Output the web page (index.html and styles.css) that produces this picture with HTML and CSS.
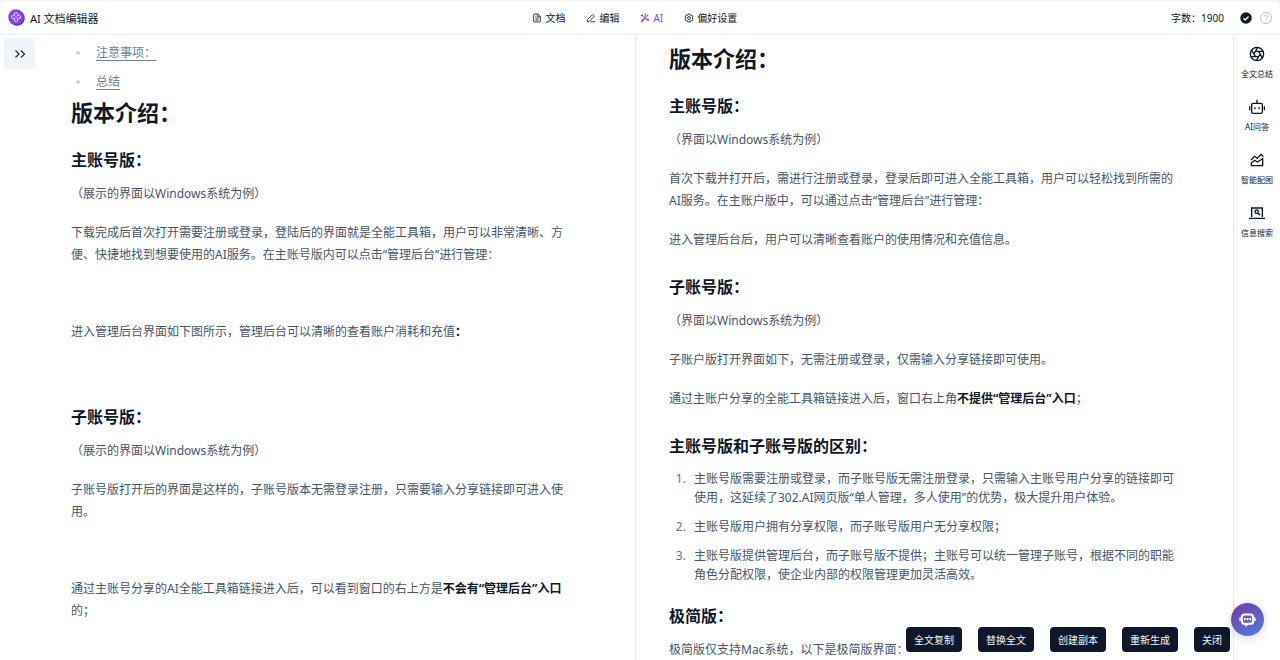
FILE: index.html
```html
<!DOCTYPE html>
<html lang="zh-CN">
<head>
<meta charset="utf-8">
<meta name="viewport" content="width=device-width, initial-scale=1">
<title>AI 文档编辑器</title>
<link rel="stylesheet" href="styles.css">
</head>
<body>
<div class="app">
  <header class="topbar">
    <div class="brand">
      <svg class="logo" viewBox="0 0 36 36" fill="none" aria-hidden="true">
        <circle cx="19" cy="19" r="16.500" fill="#4436a8"/>
        <circle cx="17" cy="17" r="16.500" fill="#8a3ff0"/>
        <path d="M13.500 13.500V11a3.500 3.500 0 0 1 7 0v2.500H23a3.500 3.500 0 0 1 0 7h-2.500V23a3.500 3.500 0 0 1-7 0v-2.500H11a3.500 3.500 0 0 1 0-7z" stroke="#f3ebff" stroke-width="2"/>
        <path d="M17 13.500v7M13.500 17h7" stroke="#d9c2ff" stroke-width="1.500"/>
      </svg>
      <span>AI 文档编辑器</span>
    </div>
    <nav class="menu" aria-label="主菜单">
      <button type="button" class="menu-item">
        <svg viewBox="0 0 24 24" aria-hidden="true"><path d="M14 2.500H5.500C4.700 2.500 4 3.200 4 4v16c0 .8.700 1.500 1.500 1.500h13c.8 0 1.500-.7 1.500-1.500V8.500zM13.500 3v6H20M8 8h2.500M8 12.500h8M8 17h8"/></svg>
        <span>文档</span>
      </button>
      <button type="button" class="menu-item">
        <svg viewBox="0 0 24 24" aria-hidden="true"><path d="M11 21h11M3 21v-4.500L16 3.500l4 4L7 21z"/></svg>
        <span>编辑</span>
      </button>
      <button type="button" class="menu-item active">
        <svg viewBox="0 0 24 24" aria-hidden="true"><path d="M3 21L14 10" stroke-width="4"/><path d="M15 9l5-5M5 3v6M2 6h6M13 2v4M11 4h4M19 13v6M16 16h6M8 10l3-2M14 16l2-3" stroke-width="2.500"/></svg>
        <span>AI</span>
      </button>
      <button type="button" class="menu-item">
        <svg viewBox="0 0 24 24" aria-hidden="true"><path d="M9.500 2.500h5l1.300 3 3.200-.3 2.500 4.300L19.700 12l1.800 2.500-2.500 4.300-3.200-.3-1.300 3h-5l-1.300-3-3.200.3-2.500-4.300L4.300 12 2.500 9.500 5 5.200l3.200.3z"/><circle cx="12" cy="12" r="3.500"/></svg>
        <span>偏好设置</span>
      </button>
    </nav>
    <div class="status">
      <span class="count">字数：1900</span>
      <svg viewBox="0 0 24 24" role="img" aria-label="已保存"><circle cx="12" cy="12" r="11.500" fill="#0f172a"/><path d="M7 12.500l3.500 3.500L17 9" fill="none" stroke="#fff" stroke-width="2.800"/></svg>
      <button type="button" class="help" aria-label="帮助">
        <svg viewBox="0 0 24 24" fill="none" stroke="#c4c4c4" stroke-width="2" aria-hidden="true"><circle cx="12" cy="12" r="11"/><path d="M8.500 9.500c0-4.500 7-4.500 7 0 0 2.500-3.500 2.500-3.500 5M12 16.500v2"/></svg>
      </button>
    </div>
  </header>

  <main class="workspace">
    <div class="gutter">
      <button type="button" class="expand" aria-label="展开目录">
        <svg viewBox="0 0 12 12" aria-hidden="true"><path d="M1.500 2.500L5 6 1.500 9.500M7 2.500L10.500 6 7 9.500"/></svg>
      </button>
    </div>
    <article class="pane source">
      <div class="prose">
        <ul>
          <li><a href="#notes">注意事项：</a></li>
          <li><a href="#summary">总结</a></li>
        </ul>
        <h1>版本介绍：</h1>
        <h3>主账号版：</h3>
        <p>（展示的界面以Windows系统为例）</p>
        <p>下载完成后首次打开需要注册或登录，登陆后的界面就是全能工具箱，用户可以非常清晰、方便、快捷地找到想要使用的AI服务。在主账号版内可以点击“管理后台”进行管理：</p>
        <p class="blank"></p>
        <p>进入管理后台界面如下图所示，管理后台可以清晰的查看账户消耗和充值<strong>：</strong></p>
        <p class="blank"></p>
        <h3>子账号版：</h3>
        <p>（展示的界面以Windows系统为例）</p>
        <p>子账号版打开后的界面是这样的，子账号版本无需登录注册，只需要输入分享链接即可进入使用。</p>
        <p class="blank"></p>
        <p>通过主账号分享的AI全能工具箱链接进入后，可以看到窗口的右上方是<strong>不会有“管理后台”入口</strong>的；</p>
      </div>
    </article>
    <article class="pane result">
      <div class="prose">
        <h1>版本介绍：</h1>
        <h3>主账号版：</h3>
        <p>（界面以Windows系统为例）</p>
        <p>首次下载并打开后，需进行注册或登录，登录后即可进入全能工具箱，用户可以轻松找到所需的AI服务。在主账户版中，可以通过点击“管理后台”进行管理：</p>
        <p>进入管理后台后，用户可以清晰查看账户的使用情况和充值信息。</p>
        <h3>子账号版：</h3>
        <p>（界面以Windows系统为例）</p>
        <p>子账户版打开界面如下，无需注册或登录，仅需输入分享链接即可使用。</p>
        <p>通过主账户分享的全能工具箱链接进入后，窗口右上角<strong>不提供“管理后台”入口</strong>；</p>
        <h3>主账号版和子账号版的区别：</h3>
        <ol>
          <li>主账号版需要注册或登录，而子账号版无需注册登录，只需输入主账号用户分享的链接即可使用，这延续了302.AI网页版“单人管理，多人使用”的优势，极大提升用户体验。</li>
          <li>主账号版用户拥有分享权限，而子账号版用户无分享权限；</li>
          <li>主账号版提供管理后台，而子账号版不提供；主账号可以统一管理子账号，根据不同的职能角色分配权限，使企业内部的权限管理更加灵活高效。</li>
        </ol>
        <h3>极简版：</h3>
        <p>极简版仅支持Mac系统，以下是极简版界面：</p>
      </div>
    </article>
    <aside class="tools" aria-label="AI 工具">
      <button type="button" class="tool">
        <svg viewBox="0 0 24 24" aria-hidden="true"><circle cx="12" cy="12" r="10"/><path d="M9.700 8H21M7.400 12L13 2.100M9.700 16L4 6.100M14.300 16H3M16.600 12L11 21.900M14.300 8L20 17.900"/></svg>
        <span>全文总结</span>
      </button>
      <button type="button" class="tool">
        <svg viewBox="0 0 24 24" aria-hidden="true"><rect x="4" y="6.500" width="16" height="15" rx="2"/><path d="M12 1v5.500M1 11v6M23 11v6"/><path d="M9 12.500v3M15 12.500v3"/></svg>
        <span>AI问答</span>
      </button>
      <button type="button" class="tool">
        <svg viewBox="0 0 24 24" aria-hidden="true"><path d="M3.500 20.500v-4l5-4 4 2.500 8-5v10.500zM3 12l5.500-5.500 4 3L18 3.500 21.500 7"/></svg>
        <span>智能配图</span>
      </button>
      <button type="button" class="tool">
        <svg viewBox="0 0 24 24" aria-hidden="true"><path d="M4 18V4.500h16V18M0 20h24"/><circle cx="11.500" cy="10" r="2.500"/><path d="M13.500 12l3 3"/></svg>
        <span>信息搜索</span>
      </button>
    </aside>
    <div class="actions">
      <button type="button">全文复制</button>
      <button type="button">替换全文</button>
      <button type="button">创建副本</button>
      <button type="button">重新生成</button>
      <button type="button">关闭</button>
    </div>
    <button type="button" class="chat" aria-label="打开聊天">
      <svg viewBox="0 0 24 24" fill="none" aria-hidden="true"><rect x="4" y="5" width="16" height="13" rx="4" stroke="#fff" stroke-width="3"/><path d="M8 18h6l-4.500 4.500z" fill="#fff"/><path d="M1.500 9v5M22.500 9v5" stroke="#fff" stroke-width="2"/><path d="M7 11.500h2.500M10.800 11.500h2.500M14.600 11.500h2.500" stroke="#fff" stroke-width="3"/></svg>
    </button>
  </main>
</div>
</body>
</html>
```
FILE: styles.css
```css
* {
  box-sizing: border-box;
}

body {
  margin: 0;
  background: #f4f4f5;
  color: #0f172a;
  font-family: "Noto Sans", "Noto Sans CJK SC", sans-serif;
  font-size: 12px;
}

button {
  margin: 0;
  padding: 0;
  border: 0;
  background: none;
  color: inherit;
  font: inherit;
  cursor: pointer;
}

svg {
  display: block;
  flex: none;
}

.app {
  display: flex;
  flex-direction: column;
  height: 100vh;
  border-top: 1px solid #f4f4f5;
  border-radius: 8px 8px 0 0;
  background: #fff;
  overflow: hidden;
}

.topbar {
  display: flex;
  flex: none;
  align-items: center;
  justify-content: space-between;
  height: 34px;
  padding: 0 8px;
  border-bottom: 1px solid #eceff6;
}

.brand {
  display: flex;
  align-items: center;
  gap: 5px;
  font-size: 11px;
}

.logo {
  width: 17px;
  height: 17px;
}

.menu {
  display: flex;
  gap: 21px;
  font-size: 10px;
}

.menu-item {
  display: flex;
  align-items: center;
  gap: 3px;
}

.menu-item svg {
  width: 10px;
  height: 10px;
  fill: none;
  stroke: currentColor;
  stroke-width: 2;
}

.menu-item.active {
  color: #8b3df5;
}

.status {
  display: flex;
  align-items: center;
  font-size: 10px;
}

.count {
  margin-right: 16px;
}

.status svg {
  width: 12px;
  height: 12px;
}

.help {
  margin-left: 8px;
}

.workspace {
  position: relative;
  display: grid;
  flex: 1;
  grid-template-columns: 38px 1fr 1fr 46px;
  min-height: 0;
}

.gutter {
  padding: 3px 0 0 4px;
}

.expand {
  display: grid;
  place-items: center;
  width: 31px;
  height: 31px;
  border-radius: 4px;
  background: #f1f5f9;
}

.expand svg {
  width: 12px;
  height: 12px;
  fill: none;
  stroke: #1e293b;
  stroke-width: 1.2;
}

.pane {
  min-width: 0;
  padding: 0 33px;
  border-right: 1px solid #e8ebf3;
  overflow: hidden;
}

.source {
  padding-top: 8px;
}

.result {
  padding-top: 11px;
}

.prose {
  max-width: 510px;
  color: #475569;
}

.prose h1,
.prose h3,
.prose strong {
  color: #0f172a;
  font-weight: 700;
}

.prose h1 {
  margin: 0;
  font-size: 22px;
  line-height: 24px;
}

.prose h3 {
  margin: 24px 0 11px;
  font-size: 16px;
  line-height: 24px;
}

.prose p {
  margin: 0 0 17px;
  line-height: 22px;
}

.prose .blank {
  height: 21px;
}

.prose ul,
.prose ol {
  margin: 0;
  padding-left: 20px;
  line-height: 19px;
}

.prose ul {
  margin-bottom: 9px;
}

.prose li {
  padding-left: 5px;
}

.prose li + li {
  margin-top: 10px;
}

.prose ul li::marker {
  color: #cbd5e1;
}

.prose ol li::marker {
  color: #64748b;
}

.prose ol + h3 {
  margin-top: 20px;
}

.prose a {
  color: #718096;
  text-underline-offset: 3px;
}

.tools {
  display: flex;
  flex-direction: column;
  gap: 20px;
  align-items: center;
  padding-top: 11px;
}

.tool {
  display: flex;
  flex-direction: column;
  gap: 6px;
  align-items: center;
  font-size: 8px;
  line-height: 11px;
}

.tool svg {
  width: 16px;
  height: 16px;
  fill: none;
  stroke: currentColor;
  stroke-width: 2;
}

.actions {
  position: absolute;
  right: 50px;
  bottom: 8px;
  display: flex;
  gap: 16px;
}

.actions button {
  height: 25px;
  padding: 0 8px;
  border-radius: 4px;
  background: #0f172a;
  color: #f8fafc;
  font-size: 10px;
}

.chat {
  position: absolute;
  right: 16px;
  bottom: 24px;
  display: grid;
  place-items: center;
  width: 33px;
  height: 33px;
  border-radius: 50%;
  background: linear-gradient(150deg, #7637a8, #4f80dc);
  box-shadow: 0 2px 10px rgba(15, 23, 42, 0.18);
}

.chat svg {
  width: 17px;
  height: 17px;
}
```
